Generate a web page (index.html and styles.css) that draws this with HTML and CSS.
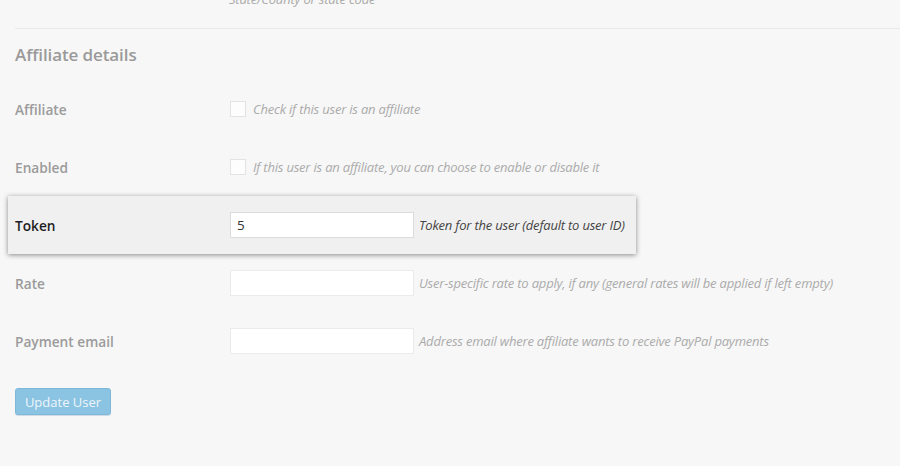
FILE: index.html
```html
<!DOCTYPE html>
<html>
<head>
<meta charset="utf-8">
<link rel="stylesheet" href="styles.css">
</head>
<body>
<div class="page">
  <div class="prev-row"><span class="desc prev-desc">State/County or state code</span></div>
  <div class="sep"></div>
  <h2 class="section-title">Affiliate details</h2>
  <div class="form">
    <div class="row">
      <div class="label">Affiliate</div>
      <div class="field"><span class="checkbox"></span><span class="desc">Check if this user is an affiliate</span></div>
    </div>
    <div class="row">
      <div class="label">Enabled</div>
      <div class="field"><span class="checkbox"></span><span class="desc">If this user is an affiliate, you can choose to enable or disable it</span></div>
    </div>
    <div class="row row-highlight">
      <div class="label">Token</div>
      <div class="field"><span class="input">5</span><span class="desc">Token for the user (default to user ID)</span></div>
    </div>
    <div class="row">
      <div class="label">Rate</div>
      <div class="field"><span class="input"></span><span class="desc">User-specific rate to apply, if any (general rates will be applied if left empty)</span></div>
    </div>
    <div class="row">
      <div class="label">Payment email</div>
      <div class="field"><span class="input"></span><span class="desc">Address email where affiliate wants to receive PayPal payments</span></div>
    </div>
  </div>
  <div class="actions"><button class="button">Update User</button></div>
</div>
</body>
</html>
```

FILE: styles.css
```css
* { box-sizing: border-box; }
html, body { margin: 0; padding: 0; }
body {
  background: #f7f7f7;
  font-family: "Open Sans", "Liberation Sans", sans-serif;
  width: 900px;
  height: 466px;
  overflow: hidden;
}
.page { padding-left: 15px; }
.prev-row {
  height: 28px;
  overflow: hidden;
  padding-left: 214px;
}
.prev-desc {
  display: block;
  line-height: 17px;
  margin-top: -9px;
}
.sep { border-top: 1px solid #e9e9e9; }
.section-title {
  margin: 0;
  height: 51px;
  display: flex;
  align-items: center;
  font-size: 17px;
  font-weight: 600;
  color: #9a9a9a;
  letter-spacing: -0.1px;
}
.row {
  height: 58px;
  display: flex;
  align-items: center;
}
.label {
  width: 215px;
  flex: none;
  font-size: 13.7px;
  font-weight: 600;
  color: #9b9b9b;
}
.field { display: flex; align-items: center; }
.desc {
  font-size: 13px;
  font-style: italic;
  color: #ababab;
  letter-spacing: -0.2px;
  white-space: nowrap;
}
.checkbox {
  width: 16px;
  height: 16px;
  border: 1px solid #e3e3e3;
  background: #fdfdfd;
  margin-right: 7px;
  flex: none;
}
.input {
  width: 184px;
  height: 26px;
  border: 1px solid #ebebeb;
  background: #ffffff;
  margin-right: 5px;
  padding: 0 6px;
  display: flex;
  align-items: center;
  font-size: 13.5px;
  color: #333;
  flex: none;
}
.row-highlight {
  margin-left: -7px;
  padding-left: 7px;
  width: 628px;
  background: #f0f0f0;
  box-shadow: 0 1px 5px rgba(0,0,0,0.45);
  position: relative;
}
.row-highlight .label { color: #1e1e1e; }
.row-highlight .desc { color: #444; }
.row-highlight .input { border-color: #dcdcdc; }
.actions { padding-top: 18px; }
.button {
  width: 96px;
  height: 27px;
  border: 1px solid #7fb8d9;
  border-radius: 3px;
  background: #8bc3e2;
  color: #eef6fb;
  font-family: "Open Sans", "Liberation Sans", sans-serif;
  font-size: 13px;
  padding: 0;
  box-shadow: 0 1px 0 rgba(120,160,190,0.3);
}
```
